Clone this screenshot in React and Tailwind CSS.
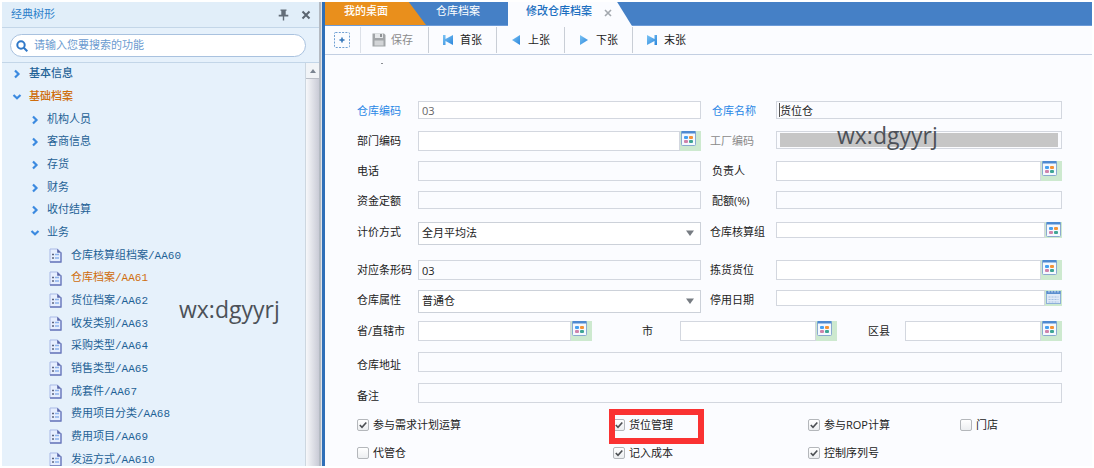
import React from "react";

const tree = [
  { text: "基本信息", level: 0 },
  { text: "基础档案", level: 0, open: true, active: true },
  { text: "机构人员", level: 1 },
  { text: "客商信息", level: 1 },
  { text: "存货", level: 1 },
  { text: "财务", level: 1 },
  { text: "收付结算", level: 1 },
  { text: "业务", level: 1, open: true },
  { text: "仓库核算组档案/AA60", level: 2 },
  { text: "仓库档案/AA61", level: 2, active: true },
  { text: "货位档案/AA62", level: 2 },
  { text: "收发类别/AA63", level: 2 },
  { text: "采购类型/AA64", level: 2 },
  { text: "销售类型/AA65", level: 2 },
  { text: "成套件/AA67", level: 2 },
  { text: "费用项目分类/AA68", level: 2 },
  { text: "费用项目/AA69", level: 2 },
  { text: "发运方式/AA610", level: 2 },
];

const indents = ["pl-[10px]", "pl-[28px]", "pl-[47px]"];

function Chevron({ open }) {
  return (
    <svg width="10" height="10" viewBox="0 0 10 10" fill="none" stroke="#3b8ae0" strokeWidth="2.2">
      <path d={open ? "M1.5 3 L5 6.2 L8.5 3" : "M3 1.5 L6.5 5 L3 8.5"} />
    </svg>
  );
}

function DocIcon() {
  return (
    <svg width="13" height="15" viewBox="0 0 13 15">
      <path d="M1 1 H8.5 L12 4.5 V14 H1 Z" fill="#e6eefe" stroke="#a9b9e6" />
      <path d="M12 4.5 V14 H1" fill="none" stroke="#6b79ba" strokeWidth="1.3" />
      <path d="M8.2 0.8 L12.3 4.8 H8.2 Z" fill="#5a66a8" />
      <path d="M3 6.5 h2 M3 10 h2" stroke="#5d6580" strokeWidth="1.6" />
      <path d="M6 6.5 h4 M6 10 h4" stroke="#8db2ec" strokeWidth="1.4" />
    </svg>
  );
}

function TreeRow({ item }) {
  return (
    <li className="flex min-h-0">
      <a
        href="#"
        className={`flex flex-1 items-center whitespace-nowrap ${indents[item.level]} ${item.active ? "text-[#cf6d0c]" : "text-[#1f6296]"} ${item.level === 2 ? "gap-[9px]" : "gap-[7px]"}`}
      >
        {item.level === 2 ? <DocIcon /> : <Chevron open={item.open} />}
        <span className={item.level === 0 ? "font-medium" : ""}>{item.text}</span>
      </a>
    </li>
  );
}

function Sidebar() {
  return (
    <aside className="flex w-[317px] shrink-0 flex-col bg-[#e6f1fb]">
      <header className="flex h-[26px] shrink-0 items-center border-b border-[#c3d6e8] bg-[#e1eef9] pr-2 pl-[9px]">
        <h2 className="flex-1 text-[11px] text-[#2d7fc9]">经典树形</h2>
        <button aria-label="固定" className="mr-3">
          <svg width="11" height="12" viewBox="0 0 11 12" fill="#636d78">
            <path d="M2.5 0.5 h6 v1.2 h-0.8 v4 h2.6 v1.8 H6.2 V11.5 H4.8 V7.5 H0.7 v-1.8 h2.6 v-4 h-0.8 Z" />
          </svg>
        </button>
        <button aria-label="关闭">
          <svg width="10" height="10" viewBox="0 0 10 10" stroke="#5b6570" strokeWidth="2">
            <path d="M1.5 1.5 L8.5 8.5 M8.5 1.5 L1.5 8.5" />
          </svg>
        </button>
      </header>
      <div className="h-[35px] shrink-0 border-b border-[#c3d6e8] pt-1.5 pr-[13px] pl-2">
        <label className="flex h-[23px] items-center gap-1.5 rounded-full border border-[#a9c2df] bg-white px-[5px]">
          <svg width="12" height="12" viewBox="0 0 12 12" fill="none" stroke="#2f78c8" strokeWidth="2">
            <circle cx="5" cy="5" r="3.7" />
            <path d="M7.8 7.8 L11.3 11.3" />
          </svg>
          <input
            aria-label="搜索功能"
            placeholder="请输入您要搜索的功能"
            className="min-w-0 flex-1 bg-transparent text-[11px] outline-none placeholder:text-[#6b9bd0]"
          />
        </label>
      </div>
      <div className="relative flex min-h-0 flex-1 overflow-hidden">
        <ul className="grid h-[408px] flex-1 auto-rows-fr font-['Liberation_Mono','Noto_Sans_CJK_SC',monospace] text-[11px] leading-4">
          {tree.map((item) => (
            <TreeRow key={item.text} item={item} />
          ))}
        </ul>
        <div className="w-3.5 border-l border-[#cdd7e0] bg-linear-to-r from-[#f7f8fa] to-[#c9cbd6]">
          <button aria-label="向上滚动" className="flex h-4 w-full items-center justify-center border-b border-[#b9bec6] bg-[#f1f4f7]">
            <svg width="6" height="4" viewBox="0 0 6 4" fill="#7b8591">
              <path d="M3 0 L6 4 H0 Z" />
            </svg>
          </button>
        </div>
        <span className="absolute top-[232px] left-[177px] font-['Open_Sans','Noto_Sans',sans-serif] text-[23px] leading-7 text-[#4c5158]">
          wx:dgyyrj
        </span>
      </div>
    </aside>
  );
}

function Tabs() {
  return (
    <nav className="flex h-6 shrink-0 border-b border-[#6c9bd8] bg-[#4580c6] text-[11px]">
      <a href="#" className="w-[101px] bg-[#e98f1c] pt-px pl-[19px] font-medium text-white [clip-path:polygon(0_0,83%_0,100%_100%,0_100%)]">
        我的桌面
      </a>
      <a href="#" className="w-[82px] pt-px pl-[10px] text-white">
        仓库档案
      </a>
      <div className="-mb-px flex w-[124px] bg-[#fbfcff] pt-px pl-[18px] [clip-path:polygon(0_0,88%_0,100%_100%,0_100%)]">
        <a href="#" className="font-medium text-[#1c6fc0]">修改仓库档案</a>
        <button aria-label="关闭标签" className="ml-3 flex h-5 items-center">
          <svg width="8" height="8" viewBox="0 0 8 8" stroke="#a3a8ae" strokeWidth="1.6">
            <path d="M1 1 L7 7 M7 1 L1 7" />
          </svg>
        </button>
      </div>
    </nav>
  );
}

const arrows = {
  first: "M1 1 H3.5 V5 L11 1 V11 L3.5 7 V11 H1 Z",
  prev: "M2 6 L10 1 V11 Z",
  next: "M10 6 L2 1 V11 Z",
  last: "M11 1 H8.5 V5 L1 1 V11 L8.5 7 V11 H11 Z",
};

function ToolButton({ icon, text }) {
  return (
    <button className="flex h-[26px] w-[68px] items-center gap-1.5 border-l border-[#c9ced6] pl-[13px] text-[#222]">
      <svg width="12" height="12" viewBox="0 0 12 12">
        <defs>
          <linearGradient id={`shade-${icon}`} x1="0" y1="0" x2="1" y2="1">
            <stop offset="0" stopColor="#7cc4f4" />
            <stop offset="1" stopColor="#2b86dc" />
          </linearGradient>
        </defs>
        <path d={arrows[icon]} fill={`url(#shade-${icon})`} />
      </svg>
      {text}
    </button>
  );
}

function Toolbar() {
  return (
    <div className="flex h-[29px] shrink-0 items-center border-b border-[#c3cfe2] text-[11px]">
      <button aria-label="新增" className="w-[35px] pl-[9px]">
        <svg width="16" height="16" viewBox="0 0 16 16" fill="none" stroke="#6f9fd2">
          <rect x="0.5" y="0.5" width="15" height="15" rx="1" strokeDasharray="2 1.3" />
          <path d="M5.5 8 h5 M8 5.5 v5" stroke="#2f72b8" strokeWidth="1.5" />
        </svg>
      </button>
      <button className="flex h-[26px] w-[68px] items-center gap-[5px] border-l border-[#dde1e8] pl-[11px] text-[#8b8b8b]">
        <svg width="14" height="14" viewBox="0 0 14 14">
          <path d="M0.5 0.5 H12 L13.5 2 V13.5 H0.5 Z" fill="#a2a5a8" />
          <path d="M3 0.5 h8 v4.5 h-8 Z" fill="#e6e8ea" />
          <path d="M8 1 h2 v3 h-2 Z" fill="#8f9295" />
          <path d="M2.5 7.5 h9 v5 h-9 Z" fill="#d3d5d7" />
        </svg>
        保存
      </button>
      <ToolButton icon="first" text="首张" />
      <ToolButton icon="prev" text="上张" />
      <ToolButton icon="next" text="下张" />
      <ToolButton icon="last" text="末张" />
    </div>
  );
}

function GridIcon() {
  return (
    <svg width="15" height="15" viewBox="0 0 15 15">
      <rect x="0.5" y="0.5" width="14" height="14" rx="1" fill="#f5f9ff" stroke="#8ba9d0" />
      <path d="M0.5 0 h14 v2.5 h-14 Z" fill="#4e8ad0" />
      <rect x="3" y="5" width="4" height="3" rx="1" fill="#45a0f0" />
      <rect x="8" y="5" width="4" height="3" rx="1" fill="#f39338" />
      <rect x="3" y="9" width="4" height="3" rx="1" fill="#cf83ab" />
      <rect x="8" y="9" width="4" height="3" rx="1" fill="#3fa595" />
    </svg>
  );
}

function CalendarIcon() {
  return (
    <svg width="15" height="14" viewBox="0 0 15 14">
      <rect x="0.5" y="1.5" width="14" height="12" fill="#dfeaf8" stroke="#8db0d8" />
      <path d="M0.5 1 h14 v3 h-14 Z" fill="#5b8fce" />
      <path d="M3 0 v2.5 M6 0 v2.5 M9 0 v2.5 M12 0 v2.5" stroke="#d9e8f8" />
      <path d="M2.5 7 h10 M2.5 9.5 h10 M2.5 12 h10" stroke="#a4c0e2" strokeDasharray="2 1" />
    </svg>
  );
}

function Label({ id, children, className = "" }) {
  return (
    <label htmlFor={id} className={`h-5 shrink-0 leading-5 whitespace-nowrap ${className}`}>
      {children}
    </label>
  );
}

const heights = { sm: "h-4", md: "h-[18px]", lg: "h-5" };

function Field({ id, value = "", size = "md", className = "" }) {
  return (
    <input
      id={id}
      defaultValue={value}
      className={`block w-full min-w-0 border border-[#d3d7df] px-[3px] outline-none ${heights[size]} ${className}`}
    />
  );
}

function Lookup({ id, size = "lg", date = false, className = "" }) {
  return (
    <div className={`flex min-w-0 ${heights[size]} ${className}`}>
      <input id={id} className="h-full min-w-0 flex-1 border border-[#d3d7df] bg-white px-[3px] outline-none" />
      <button
        type="button"
        aria-label={date ? "选择日期" : "选择"}
        className={`flex h-full items-start bg-[#cde9cf] pl-px ${size === "sm" ? "w-[17px]" : "w-[21px]"}`}
      >
        {date ? <CalendarIcon /> : <GridIcon />}
      </button>
    </div>
  );
}

function Choice({ id, value }) {
  return (
    <div className="relative">
      <select id={id} className="block h-[23px] w-full appearance-none border border-[#ccd1d9] bg-white px-[3px] outline-none">
        <option>{value}</option>
      </select>
      <svg className="pointer-events-none absolute top-2 right-[7px]" width="8" height="6" viewBox="0 0 8 6" fill="#777c82">
        <path d="M0 0.5 H8 L4 6 Z" />
      </svg>
    </div>
  );
}

function Row({ children, className = "h-[30px]" }) {
  return <div className={`grid grid-cols-[61px_283fr_75px_286fr] items-start ${className}`}>{children}</div>;
}

function Check({ text, checked = false, marked = false }) {
  return (
    <label className="relative flex h-[22px] items-center gap-1 whitespace-nowrap">
      <input
        type="checkbox"
        defaultChecked={checked}
        className="peer size-3 shrink-0 appearance-none rounded-[2px] border border-[#b4b7bb] bg-linear-to-b from-white to-[#eceef0]"
      />
      <svg
        className="pointer-events-none absolute top-[7px] left-0.5 hidden peer-checked:block"
        width="8"
        height="8"
        viewBox="0 0 8 8"
        fill="none"
        stroke="#4c4f53"
        strokeWidth="1.6"
      >
        <path d="M0.8 4 L3 6.3 L7.3 1.5" />
      </svg>
      {text}
      {marked && <span className="absolute -top-[5px] -left-1 h-[35px] w-[95px] border-6 border-[#fa3232]" />}
    </label>
  );
}

function WarehouseForm() {
  return (
    <form className="pr-[30px] pl-8 text-[11px] text-[#222]">
      <div className="h-[46px] pt-2 pl-6">
        <div className="h-px w-0.5 bg-[#8a8d92]" />
      </div>
      <Row>
        <Label id="code" className="text-[#2a88e6]">仓库编码</Label>
        <Field id="code" value="03" className="bg-white text-[#666]" />
        <Label id="name" className="pl-[11px] text-[#2a88e6]">仓库名称</Label>
        <div className="relative">
          <Field id="name" value="货位仓" />
          <span className="absolute top-0.5 left-[3px] h-3.5 w-px bg-[#555]" />
        </div>
      </Row>
      <Row>
        <Label id="dept">部门编码</Label>
        <Lookup id="dept" />
        <Label id="factory" className="pl-[9px] text-[#8a8a8a]">工厂编码</Label>
        <div className="relative">
          <Field id="factory" className="bg-[#c6c6c6] bg-clip-content py-px" />
          <span className="absolute -top-[10px] left-[61px] font-['Open_Sans','Noto_Sans',sans-serif] text-[23px] leading-7 text-[#4c5158]">
            wx:dgyyrj
          </span>
        </div>
      </Row>
      <Row>
        <Label id="phone">电话</Label>
        <Field id="phone" size="lg" />
        <Label id="owner" className="pl-[11px]">负责人</Label>
        <Lookup id="owner" />
      </Row>
      <Row className="h-[31px]">
        <Label id="fund">资金定额</Label>
        <Field id="fund" />
        <Label id="quota" className="pl-[11px]">配额(%)</Label>
        <Field id="quota" />
      </Row>
      <Row className="h-[38px]">
        <Label id="pricing">计价方式</Label>
        <Choice id="pricing" value="全月平均法" />
        <Label id="group" className="pl-[9px]">仓库核算组</Label>
        <Lookup id="group" size="sm" />
      </Row>
      <Row>
        <Label id="barcode">对应条形码</Label>
        <Field id="barcode" value="03" size="lg" />
        <Label id="pick" className="pl-[9px]">拣货货位</Label>
        <Lookup id="pick" />
      </Row>
      <Row className="h-[31px]">
        <Label id="kind">仓库属性</Label>
        <Choice id="kind" value="普通仓" />
        <Label id="stop" className="pl-[9px]">停用日期</Label>
        <Lookup id="stop" size="sm" date />
      </Row>
      <div className="flex h-[31px] items-start">
        <Label id="province" className="w-[61px]">省/直辖市</Label>
        <Lookup id="province" className="flex-[175]" />
        <Label id="city" className="w-[88px] pl-[50px]">市</Label>
        <Lookup id="city" className="flex-[158]" />
        <Label id="county" className="w-[68px] pl-[31px]">区县</Label>
        <Lookup id="county" className="flex-[158]" />
      </div>
      <div className="flex h-[31px] items-start">
        <Label id="address" className="w-[61px] pt-[3px]">仓库地址</Label>
        <Field id="address" size="lg" />
      </div>
      <div className="flex h-[31px] items-start">
        <Label id="remark" className="w-[61px] pt-[3px]">备注</Label>
        <Field id="remark" size="lg" />
      </div>
      <div className="grid grid-cols-[256fr_195fr_152fr_102fr] gap-y-1.5">
        <Check text="参与需求计划运算" checked />
        <Check text="货位管理" checked marked />
        <Check text="参与ROP计算" checked />
        <Check text="门店" />
        <Check text="代管仓" />
        <Check text="记入成本" checked />
        <Check text="控制序列号" checked />
      </div>
    </form>
  );
}

export default function App() {
  return (
    <div className="flex h-screen overflow-hidden bg-white p-0.5 font-['Open_Sans','Noto_Sans_CJK_SC',sans-serif]">
      <Sidebar />
      <div className="w-1.5 shrink-0 border-r-3 border-l-2 border-r-[#2f6fb8] border-l-[#b4bac2] bg-[#dfe3e8]" />
      <main className="flex min-w-0 flex-1 flex-col bg-[#fbfcff]">
        <Tabs />
        <Toolbar />
        <WarehouseForm />
      </main>
    </div>
  );
}
